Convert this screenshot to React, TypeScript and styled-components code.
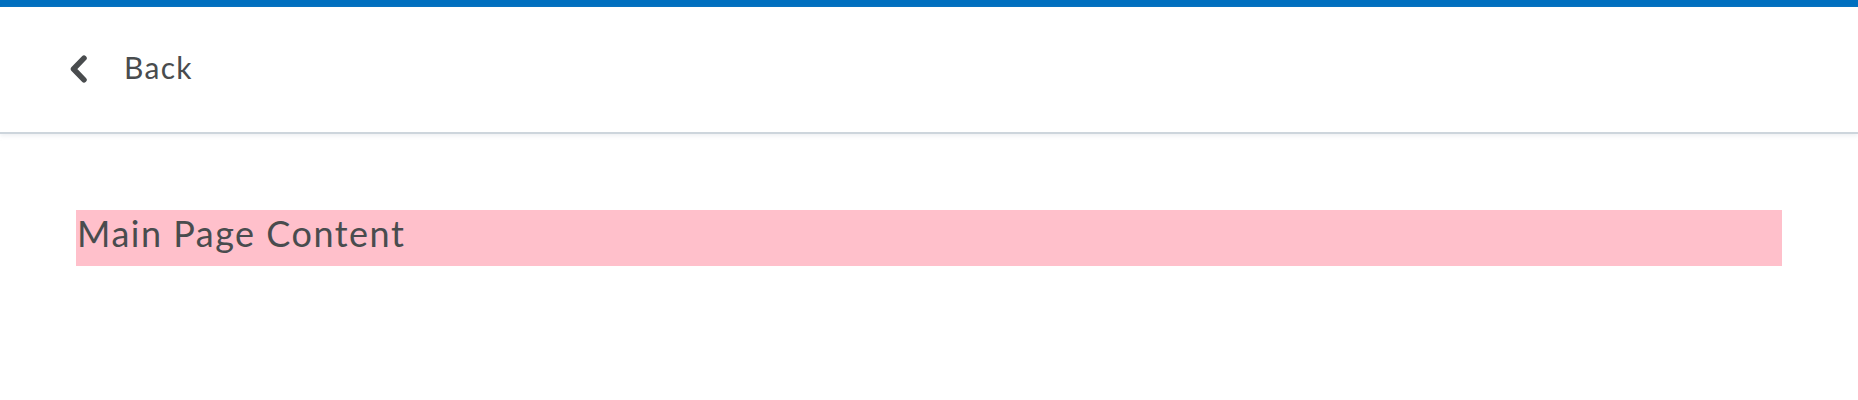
import React from "react";
import styled, { createGlobalStyle } from "styled-components";

const GlobalStyle = createGlobalStyle`
  html, body {
    margin: 0;
    padding: 0;
    background: #ffffff;
    font-family: Lato, "Noto Sans", sans-serif;
    color: #494c4e;
  }
`;

const Page = styled.div`
  display: flex;
  flex-direction: column;
  width: 100%;
`;

const BrandBar = styled.div`
  height: 7px;
  background: #006fbf;
`;

const Header = styled.header`
  display: flex;
  align-items: center;
  padding: 0 0 0 70px;
  border-bottom: 2px solid #cdd5dc;
  box-shadow: 0 2px 4px rgba(205, 213, 220, 0.35);
  box-sizing: border-box;
  height: 127px;
`;

const BackButton = styled.button`
  display: flex;
  align-items: center;
  gap: 36px;
  background: none;
  border: none;
  padding: 0;
  margin-top: -5px;
  cursor: pointer;
  font-family: Lato, "Noto Sans", sans-serif;
  font-size: 30px;
  letter-spacing: 1.3px;
  color: #494c4e;
`;

const Chevron = styled.svg`
  width: 18px;
  height: 28px;
  display: block;
  margin-top: 3px;
`;

const Main = styled.main`
  padding: 76px;
`;

const ContentBox = styled.div`
  background: pink;
  height: 56px;
  box-sizing: border-box;
  font-size: 36px;
  line-height: 46px;
  letter-spacing: 1.5px;
  color: #494c4e;
  padding-left: 1px;
`;

export default function App() {
  return (
    <>
      <GlobalStyle />
      <Page>
        <BrandBar />
        <Header>
          <BackButton>
            <Chevron viewBox="0 0 18 28">
              <polyline
                points="14,3.2 3.5,14 14,24.8"
                fill="none"
                stroke="#494c4e"
                strokeWidth="5.5"
                strokeLinecap="round"
                strokeLinejoin="round"
              />
            </Chevron>
            Back
          </BackButton>
        </Header>
        <Main>
          <ContentBox>Main Page Content</ContentBox>
        </Main>
      </Page>
    </>
  );
}
